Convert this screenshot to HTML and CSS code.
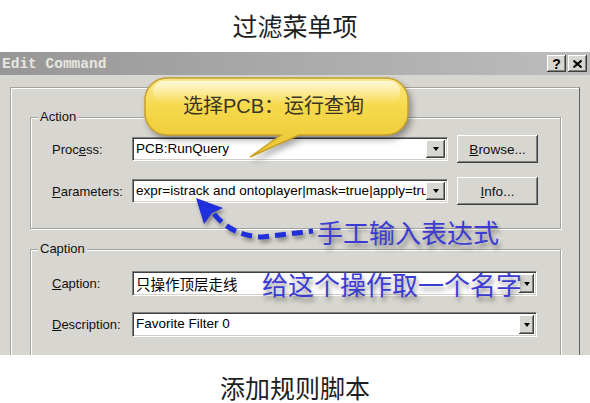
FILE: index.html
```html
<!DOCTYPE html>
<html lang="zh-CN">
<head>
<meta charset="utf-8">
<title>过滤菜单项</title>
<link rel="stylesheet" href="styles.css">
</head>
<body>
<div class="page">
  <header class="page-title">过滤菜单项</header>

  <section class="dialog">
    <div class="titlebar">
      <span class="titlebar-text">Edit Command</span>
      <div class="titlebar-buttons">
        <span class="tb-btn tb-help">?</span>
        <span class="tb-btn tb-close">
          <svg width="9" height="8" viewBox="0 0 9 8"><path d="M0.5,0.5 L8.5,7.5 M8.5,0.5 L0.5,7.5" stroke="#000" stroke-width="2" fill="none"/></svg>
        </span>
      </div>
    </div>

    <div class="dialog-body">
      <div class="panel">
        <fieldset class="group group-action">
          <legend>Action</legend>
          <div class="rows rows-action">
            <div class="row">
              <span class="field-label">Proc<u>e</u>ss:</span>
              <div class="combo combo-action"><span class="combo-text">PCB:RunQuery</span><span class="combo-arrow"></span></div>
              <span class="btn"><u>B</u>rowse...</span>
            </div>
            <div class="row">
              <span class="field-label"><u>P</u>arameters:</span>
              <div class="combo combo-action"><span class="combo-text">expr=istrack and ontoplayer|mask=true|apply=true</span><span class="combo-arrow"></span></div>
              <span class="btn"><u>I</u>nfo...</span>
            </div>
          </div>
        </fieldset>

        <fieldset class="group group-caption">
          <legend>Caption</legend>
          <div class="rows rows-caption">
            <div class="row">
              <span class="field-label"><u>C</u>aption:</span>
              <div class="combo combo-caption"><span class="combo-text cjk">只操作顶层走线</span><span class="combo-arrow combo-arrow-sm"></span></div>
            </div>
            <div class="row">
              <span class="field-label"><u>D</u>escription:</span>
              <div class="combo combo-caption"><span class="combo-text">Favorite Filter 0</span><span class="combo-arrow combo-arrow-sm"></span></div>
            </div>
          </div>
        </fieldset>
      </div>
    </div>
  </section>

  <footer class="page-footer">添加规则脚本</footer>

  <svg class="overlay" width="590" height="403" viewBox="0 0 590 403" aria-hidden="true">
    <defs>
      <linearGradient id="bubbleFill" x1="0" y1="0" x2="0" y2="1">
        <stop offset="0" stop-color="#fbe894"/>
        <stop offset="0.35" stop-color="#f6da4c"/>
        <stop offset="1" stop-color="#ecc433"/>
      </linearGradient>
      <linearGradient id="bubbleGloss" x1="0" y1="0" x2="0" y2="1">
        <stop offset="0" stop-color="#fffbe0" stop-opacity="0.9"/>
        <stop offset="1" stop-color="#fff6c0" stop-opacity="0"/>
      </linearGradient>
    </defs>
    <g class="bubble">
      <path d="M167,78 H386 A22,22 0 0 1 408,100 V113 A22,22 0 0 1 386,135 H299 L250,157 L281,135 H167 A22,22 0 0 1 145,113 V100 A22,22 0 0 1 167,78 Z" fill="url(#bubbleFill)" stroke="#c7a128" stroke-width="1.5"/>
      <rect x="153" y="81" width="247" height="22" rx="11" fill="url(#bubbleGloss)"/>
    </g>
    <g class="arrow">
      <path d="M214,214 Q232,236 262,237 L313,231" fill="none" stroke="#1f2fdc" stroke-width="5" stroke-dasharray="11 6"/>
      <polygon points="196,198 223,208 212,213 204,224" fill="#1f2fdc"/>
    </g>
  </svg>

  <div class="note note-bubble">选择PCB：运行查询</div>
  <div class="note note-blue note-expr">手工输入表达式</div>
  <div class="note note-blue note-name">给这个操作取一个名字</div>
</div>
</body>
</html>
```

FILE: styles.css
```css
* { box-sizing: border-box; }

html, body {
  margin: 0;
  padding: 0;
}

body {
  width: 590px;
  height: 403px;
  overflow: hidden;
  background: #fff;
  font-family: "Liberation Sans", "Noto Sans CJK SC", sans-serif;
  color: #111;
}

.page {
  position: relative;
  width: 590px;
  height: 403px;
}

.page-title {
  height: 52px;
  display: flex;
  align-items: center;
  justify-content: center;
  padding-bottom: 2px;
  font-family: "Noto Sans CJK SC", sans-serif;
  font-size: 25px;
  color: #1e1e1e;
}

.page-footer {
  height: 48px;
  display: flex;
  align-items: center;
  justify-content: center;
  padding-top: 16px;
  font-family: "Noto Sans CJK SC", sans-serif;
  font-size: 25px;
  line-height: 30px;
  color: #1e1e1e;
}

/* ---------- dialog ---------- */
.dialog {
  height: 303px;
  background: #d8d6d0;
  display: flex;
  flex-direction: column;
  overflow: hidden;
}

.titlebar {
  height: 23px;
  flex: none;
  display: flex;
  align-items: center;
  justify-content: space-between;
  padding: 0 3px 0 2px;
  background: linear-gradient(to right, #979797, #bdbdbd);
}

.titlebar-text {
  font-family: "Liberation Mono", monospace;
  font-weight: bold;
  font-size: 14.5px;
  color: #e8e6e0;
}

.titlebar-buttons {
  display: flex;
  gap: 2px;
}

.tb-btn {
  width: 19px;
  height: 17px;
  display: flex;
  align-items: center;
  justify-content: center;
  background: #d8d6d0;
  box-shadow: inset -1px -1px 0 #404040, inset 1px 1px 0 #fff, inset -2px -2px 0 #808080;
  font-family: "Liberation Sans", sans-serif;
  font-weight: bold;
  font-size: 14px;
  line-height: 1;
  color: #000;
}

.dialog-body {
  flex: 1;
  min-height: 0;
  padding: 12px 10px 0 10px;
}

.panel {
  border-left: 1px solid #a4a29c;
  border-top: 1px solid #a4a29c;
  border-right: 1px solid #606060;
  box-shadow: inset 1px 1px 0 #fff;
  padding: 21px 18px 0 19px;
}

/* ---------- group boxes ---------- */
.group {
  margin: 0;
  padding: 0;
  min-width: 0;
  border: 1px solid #a4a29c;
  box-shadow: 1px 1px 0 #fff, inset 1px 1px 0 #fff;
}

.group legend {
  margin-left: 7px;
  padding: 0 2px;
  font-size: 13px;
  line-height: 16px;
  background: #d8d6d0;
  color: #111;
}

.group-caption {
  margin-top: 12px;
}

.rows {
  display: flex;
  flex-direction: column;
}

.rows-action {
  padding: 10px 22px 23px 21px;
  gap: 14px;
}

.rows-caption {
  padding: 14px 22px 30px 21px;
  gap: 16px;
}

.row {
  display: flex;
  align-items: center;
}

.rows-action .row { height: 28px; }
.rows-caption .row { height: 25px; }

.field-label {
  width: 80px;
  flex: none;
  font-size: 13px;
  color: #111;
}

.field-label u,
.btn u {
  text-underline-offset: 1px;
}

/* ---------- combo boxes ---------- */
.combo {
  display: flex;
  align-items: stretch;
  flex: none;
  background: #fff;
  border-top: 1px solid #808080;
  border-left: 1px solid #808080;
  border-bottom: 1px solid #fff;
  border-right: 1px solid #fff;
  box-shadow: inset 1px 1px 0 #404040, inset -1px -1px 0 #d4d0c8;
  padding: 2px 2px 2px 3px;
  overflow: hidden;
}

.combo-action {
  width: 316px;
  height: 24px;
}

.combo-caption {
  width: 405px;
  height: 25px;
}

.combo-text {
  flex: 1;
  min-width: 0;
  overflow: hidden;
  white-space: nowrap;
  font-size: 13.5px;
  line-height: 18px;
  color: #000;
}

.combo-text.cjk {
  font-family: "Noto Sans CJK SC", sans-serif;
  font-size: 14.5px;
  line-height: 19px;
}

.combo-arrow {
  width: 19px;
  flex: none;
  display: flex;
  align-items: center;
  justify-content: center;
  background: #d8d6d0;
  box-shadow: inset -1px -1px 0 #404040, inset 1px 1px 0 #fff, inset -2px -2px 0 #808080;
}

.combo-arrow-sm {
  width: 15px;
}

.combo-arrow::after {
  content: "";
  width: 0;
  height: 0;
  border-left: 3.5px solid transparent;
  border-right: 3.5px solid transparent;
  border-top: 4px solid #000;
}

/* ---------- push buttons ---------- */
.btn {
  margin-left: 9px;
  width: 81px;
  height: 28px;
  flex: none;
  display: flex;
  align-items: center;
  justify-content: center;
  background: #d8d6d0;
  box-shadow: inset -1px -1px 0 #404040, inset 1px 1px 0 #fff, inset -2px -2px 0 #808080;
  font-size: 13.5px;
  color: #111;
}

/* ---------- annotations ---------- */
.overlay {
  position: absolute;
  left: 0;
  top: 0;
  z-index: 1;
  pointer-events: none;
}

.bubble {
  filter: drop-shadow(3px 4px 3px rgba(0, 0, 0, 0.35));
}

.arrow {
  filter: drop-shadow(2px 3px 2px rgba(0, 0, 0, 0.4));
}

.note {
  position: absolute;
  z-index: 2;
  white-space: nowrap;
}

.note-bubble {
  left: 183px;
  top: 94px;
  font-family: "Liberation Sans", "Noto Sans CJK SC", sans-serif;
  font-size: 20px;
  line-height: 24px;
  color: #3a3626;
}

.note-blue {
  font-family: "Noto Sans CJK SC", sans-serif;
  font-size: 26px;
  line-height: 30px;
  color: #3c3cd4;
  text-shadow: 2px 4px 4px rgba(50, 50, 50, 0.5);
}

.note-expr {
  left: 317px;
  top: 217px;
}

.note-name {
  left: 262px;
  top: 269px;
}
```
